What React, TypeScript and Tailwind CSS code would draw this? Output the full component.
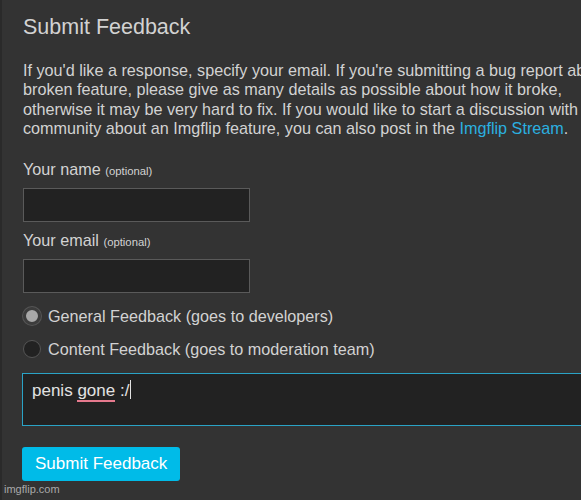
import React, { useState } from 'react'

export default function App() {
  const [kind, setKind] = useState('general')

  return (
    <div className="relative h-[500px] w-[581px] overflow-hidden bg-[#333333] font-['Liberation_Sans',Arial,sans-serif] text-[#d2d2d2]">
      {/* thin darker strip on the left edge */}
      <div className="absolute left-0 top-0 h-full w-[2px] bg-[#2a2a2a]" />

      <div className="w-[640px] pl-[23px] pt-[14px]">
        <h1 className="text-[21.5px] leading-[26px]">Submit Feedback</h1>

        <p className="mt-[21px] whitespace-nowrap text-[16.2px] leading-[19.4px]">
          If you'd like a response, specify your email. If you're submitting a bug report about a
          <br />
          broken feature, please give as many details as possible about how it broke,
          <br />
          otherwise it may be very hard to fix. If you would like to start a discussion with the
          <br />
          community about an Imgflip feature, you can also post in the{' '}
          <a className="text-[#2bb0e0]" href="#">Imgflip Stream</a>.
        </p>

        <div className="mt-[20px]">
          <label className="block text-[16.2px] leading-[20px]">
            Your name <span className="text-[11.3px]">(optional)</span>
          </label>
          <input
            type="text"
            className="mt-[7px] block h-[34px] w-[227px] border border-[#5a5a5a] bg-[#222222] px-2 text-[15px] text-[#ddd] outline-none"
          />
        </div>

        <div className="mt-[8px]">
          <label className="block text-[16.2px] leading-[20px]">
            Your email <span className="text-[11.3px]">(optional)</span>
          </label>
          <input
            type="text"
            className="mt-[7px] block h-[34px] w-[227px] border border-[#5a5a5a] bg-[#222222] px-2 text-[15px] text-[#ddd] outline-none"
          />
        </div>

        <div className="mt-[14px] flex flex-col gap-[14px]">
          <label className="flex items-center gap-[7px] text-[16.2px] leading-[19px]" onClick={() => setKind('general')}>
            <span
              className={
                kind === 'general'
                  ? 'block h-[18px] w-[18px] rounded-full border-[3px] border-[#3c3c3c] bg-[#a8a8a8] shadow-[0_0_0_1px_#555]'
                  : 'block h-[18px] w-[18px] rounded-full border border-[#555] bg-[#222]'
              }
            />
            General Feedback (goes to developers)
          </label>
          <label className="flex items-center gap-[7px] text-[16.2px] leading-[19px]" onClick={() => setKind('content')}>
            <span
              className={
                kind === 'content'
                  ? 'block h-[18px] w-[18px] rounded-full border-[3px] border-[#3c3c3c] bg-[#a8a8a8] shadow-[0_0_0_1px_#555]'
                  : 'block h-[18px] w-[18px] rounded-full border border-[#555] bg-[#222]'
              }
            />
            Content Feedback (goes to moderation team)
          </label>
        </div>

        <div className="-ml-px mt-[14px] h-[53px] w-[600px] border border-[#2aa3c6] bg-[#222222] px-[9px] pt-[3px] text-[17px] leading-[22px] text-[#e2e2e2]">
          penis <span className="border-b-2 border-[#e67a8e]">gone</span> :/
          <span className="ml-px inline-block h-[19px] w-px translate-y-[3px] bg-[#e2e2e2]" />
        </div>

        <button className="-ml-px mt-[21px] h-[34px] rounded-[3px] bg-[#00bbe8] px-[13px] text-[17px] text-white">
          Submit Feedback
        </button>
      </div>

      <div className="absolute bottom-[3px] left-[4px] text-[11px] text-[#a9a9a9]">imgflip.com</div>
    </div>
  )
}
